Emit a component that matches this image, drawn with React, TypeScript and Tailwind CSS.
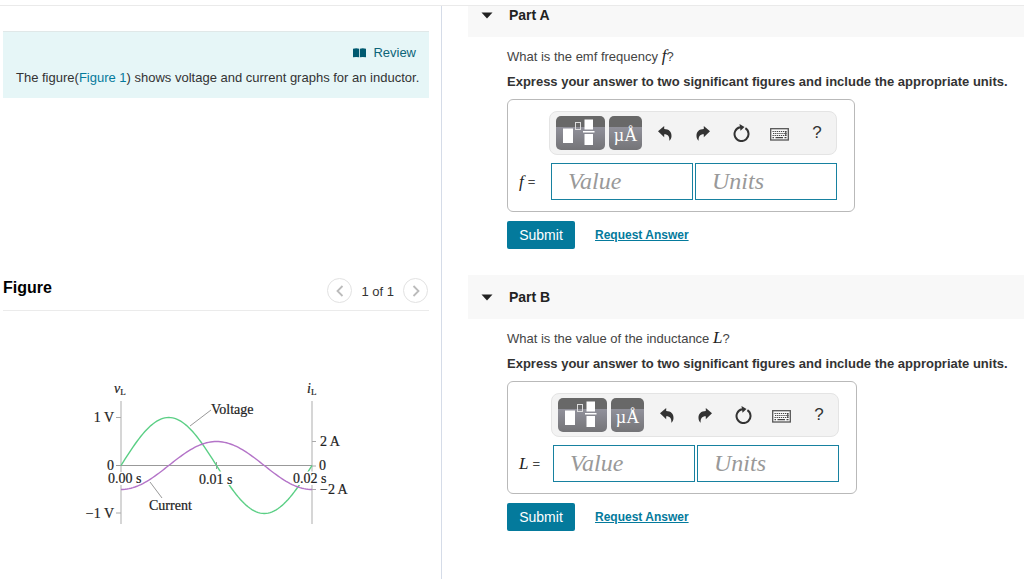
import React from 'react';

const ORIGIN_X = 121;
const ORIGIN_Y = 465.5;
const PERIOD = 191;

function wave(fn: (phase: number) => number, amplitude: number) {
  const points: string[] = [];
  for (let i = 0; i <= 96; i++) {
    const x = ORIGIN_X + (PERIOD * i) / 96;
    const y = ORIGIN_Y - amplitude * fn((2 * Math.PI * i) / 96);
    points.push(`${x.toFixed(2)},${y.toFixed(2)}`);
  }
  return 'M' + points.join('L');
}

function InductorGraph() {
  return (
    <svg
      viewBox="80 376 280 152"
      className="block w-[280px] h-[152px] font-['Liberation_Serif',serif] text-[14px]"
      role="img"
      aria-label="Voltage and current graphs"
    >
      <g stroke="#c9c9c9" strokeWidth="1.5">
        <path d="M121 401V524M312 401V524" />
        <path d="M116 417.5h5M116 513h5M312 441.5h4M312 466h4M312 489.5h4" stroke="#aaa" strokeWidth="1" />
      </g>
      <path d="M116 465.5H312M216.500 462v7" stroke="#999" />
      <path d={wave(Math.sin, 48)} fill="none" stroke="#5bcf85" strokeWidth="1.4" />
      <path d="M108 472h34v13h-34zM198 471.500h35v13.500h-35zM292 471.500h35v13.500h-35z" fill="#fff" />
      <path d={wave((p) => -Math.cos(p), 24)} fill="none" stroke="#b474c8" strokeWidth="1.4" />
      <path d="M190 426L211 410M150 482L162 498" stroke="#999" />
      <g fill="#222" stroke="#222" strokeWidth="0.2">
        <text x="114" y="393" fontStyle="italic">v<tspan fontStyle="normal" fontSize="9" dy="2">L</tspan></text>
        <text x="307" y="393" fontStyle="italic">i<tspan fontStyle="normal" fontSize="9" dy="2">L</tspan></text>
        <text x="114" y="422" textAnchor="end">1 V</text>
        <text x="114" y="470" textAnchor="end">0</text>
        <text x="114" y="518" textAnchor="end">−1 V</text>
        <text x="108" y="483">0.00 s</text>
        <text x="199" y="484">0.01 s</text>
        <text x="293" y="483">0.02 s</text>
        <text x="320" y="446">2 A</text>
        <text x="319" y="470">0</text>
        <text x="320" y="494">−2 A</text>
        <text x="211" y="414">Voltage</text>
        <text x="149" y="510">Current</text>
      </g>
    </svg>
  );
}

function CurvedArrow({ flip = false }: { flip?: boolean }) {
  return (
    <svg viewBox="0 0 14 15" className={flip ? 'w-[14px] h-[15px] -scale-x-100' : 'w-[14px] h-[15px]'} aria-hidden="true">
      <path d="M0 5.300L6.200 0V3C10.800 3 13.800 5.800 13.500 10.300C13.400 12.300 12.400 14 11.300 14.800C11.700 10.800 10.300 8.300 6.200 8.300V11.200Z" fill="#333" />
    </svg>
  );
}

function ResetIcon() {
  return (
    <svg viewBox="0 0 18 18" className="w-[18px] h-[18px]" aria-hidden="true">
      <path d="M13.400 4.200A7 7 0 1 1 8 3.200" fill="none" stroke="#333" strokeWidth="2" />
      <path d="M7.500 0L12.500 3L8.500 6.700Z" fill="#333" />
    </svg>
  );
}

function KeyboardIcon() {
  return (
    <svg viewBox="0 0 19 13" className="w-[19px] h-[13px]" aria-hidden="true">
      <rect x="0.700" y="0.700" width="17.600" height="11.300" fill="#fafafa" stroke="#555" strokeWidth="1.300" />
      <path d="M2.500 3.500H16.500M3 5.500H16.500M2.500 7.500H16.500" stroke="#444" strokeWidth="1.200" strokeDasharray="1.300 0.800" />
      <path d="M2.500 9.700H4M5.500 9.700H13M14.500 9.700H16.500M15.800 3V8" stroke="#444" strokeWidth="1.200" />
    </svg>
  );
}

function TemplatesIcon() {
  return (
    <svg viewBox="0 0 49 34" className="w-[49px] h-[34px]" aria-hidden="true">
      <path d="M7 12.500h10v14.500h-10zM28.500 3.500h8.500v10h-8.500zM28.500 18h8.500v11h-8.500zM27 15h11.500v1.500h-11.500z" fill="#fff" />
      <rect x="19.500" y="6.500" width="5" height="7" fill="none" stroke="#ddd" />
    </svg>
  );
}

const darkButton =
  'h-[34px] rounded-[5px] text-white bg-[linear-gradient(#686868_0,#686868_11px,#91919b_11px,#747477_100%)] flex items-center justify-center';
const toolButton = 'w-[38px] h-[34px] flex items-center justify-center text-[#333]';

function Toolbar() {
  return (
    <div role="toolbar" className="flex h-[44px] items-center rounded-[8px] border border-[#e4e4e4] bg-[#f3f3f3] pl-[6px]">
      <button type="button" aria-label="Templates" className={`${darkButton} w-[49px]`}>
        <TemplatesIcon />
      </button>
      <button type="button" className={`${darkButton} ml-1 w-[33px] pt-1 font-['Liberation_Serif',serif] text-[18px]`}>
        µÅ
      </button>
      <div className="ml-[4px] flex">
        <button type="button" aria-label="Undo" className={toolButton}><CurvedArrow /></button>
        <button type="button" aria-label="Redo" className={toolButton}><CurvedArrow flip /></button>
        <button type="button" aria-label="Reset" className={toolButton}><ResetIcon /></button>
        <button type="button" aria-label="Keyboard" className={`${toolButton} pt-[3px]`}><KeyboardIcon /></button>
        <button type="button" className={`${toolButton} text-[17px]`}>?</button>
      </div>
    </div>
  );
}

interface PartProps {
  title: string;
  question: string;
  symbol: string;
  columns: string;
}

const field =
  "h-[37px] w-[142px] border border-[#1781a0] bg-white px-4 font-['Liberation_Serif',serif] text-[24px] text-[#333] placeholder:italic placeholder:text-[#999] outline-none";

function Part({ title, question, symbol, columns }: PartProps) {
  const id = title.replace(' ', '-').toLowerCase();
  return (
    <section className="mb-[26px]">
      <h2 className="bg-[#f8f8f8] text-[14px] font-bold leading-5 text-[#222]">
        <button type="button" className="flex h-[44px] w-full items-center pl-[13px]">
          <svg viewBox="0 0 12 7" className="h-[7px] w-[12px]" aria-hidden="true">
            <path d="M0.500 0.500H11.500L6 6.500Z" fill="#222" />
          </svg>
          <span className="ml-4">{title}</span>
        </button>
      </h2>
      <div className="pl-[39px] pt-[8px]">
        <p className="h-[24px] whitespace-nowrap leading-[24px] text-[#444]">
          {question}{' '}
          <i className="font-['Liberation_Serif',serif] text-[17px] leading-none text-[#222]">{symbol}</i>?
        </p>
        <p className="mt-[3px] whitespace-nowrap font-bold leading-[20px] text-[#333]">
          Express your answer to two significant figures and include the appropriate units.
        </p>
        <div className={`mt-[7px] grid w-fit rounded-[6px] border border-[#b9b9b9] pb-[11px] pl-[11px] pr-[17px] pt-[11px] ${columns}`}>
          <div className="col-start-2">
            <Toolbar />
          </div>
          <label htmlFor={`${id}-value`} className="mt-[8px] flex h-[37px] items-center text-[#444]">
            <i className="mr-1 font-['Liberation_Serif',serif] text-[17px] text-[#222]">{symbol}</i>=
          </label>
          <div className="mt-[8px] flex gap-[2px] pl-[2px]">
            <input id={`${id}-value`} placeholder="Value" className={field} />
            <input aria-label={`${title} units`} placeholder="Units" className={field} />
          </div>
        </div>
        <div className="mt-[9px] flex items-center">
          <button type="button" className="h-[28px] w-[68px] rounded-[2px] bg-[#047a9c] text-[14px] text-white">
            Submit
          </button>
          <a href="#request" className="ml-5 text-[12px] font-bold text-[#047a9c] underline">
            Request Answer
          </a>
        </div>
      </div>
    </section>
  );
}

const pager = 'flex h-[25px] w-[25px] items-center justify-center rounded-full border border-[#e2e2e2] bg-white';

export default function App() {
  return (
    <div className="flex min-h-screen flex-col bg-white pt-[5px] font-['Liberation_Sans',Arial,sans-serif] text-[13px] text-[#333]">
      <main className="grid flex-1 grid-cols-[minmax(0,442fr)_minmax(0,582fr)] border-t border-[#eaeaea]">
        <aside className="border-r border-[#d5dce8] pl-[3px] pr-3">
          <div className="mt-[25px] h-[67px] border-t border-[#e0e8e8] bg-[#e6f6f7] px-[13px] pt-[11px] leading-5">
            <a href="#review" className="flex items-center justify-end gap-[7px] text-[#0d6478]">
              <svg viewBox="0 0 13 10" className="h-[10px] w-[13px]" aria-hidden="true">
                <path d="M0 0.800Q3.500 -0.300 6.100 0.800V9.300Q3.500 8.600 0 9.300ZM6.900 0.800Q9.500 -0.300 13 0.800V9.300Q9.500 8.600 6.900 9.300Z" fill="#005a70" />
              </svg>
              Review
            </a>
            <p className="mt-[5px] whitespace-nowrap">
              The figure(<a href="#figure" className="text-[#047a9c]">Figure 1</a>) shows voltage and current graphs for an inductor.
            </p>
          </div>
          <div id="figure" className="mt-[177px] flex h-[36px] items-start justify-between border-b border-[#ebebeb]">
            <h2 className="pt-[1px] text-[16px] font-bold leading-6 text-black">Figure</h2>
            <div className="flex items-center gap-[9px] pr-[1px] pt-[3px]">
              <button type="button" aria-label="Previous figure" className={pager}>
                <svg viewBox="0 0 8 12" className="h-3 w-2" aria-hidden="true"><path d="M6.500 1L1.500 6L6.500 11" fill="none" stroke="#bbb" strokeWidth="1.800" /></svg>
              </button>
              <span className="pt-[3px]">1 of 1</span>
              <button type="button" aria-label="Next figure" className={pager}>
                <svg viewBox="0 0 8 12" className="h-3 w-2" aria-hidden="true"><path d="M1.500 1L6.500 6L1.500 11" fill="none" stroke="#bbb" strokeWidth="1.800" /></svg>
              </button>
            </div>
          </div>
          <div className="pl-[77px] pt-[65px]">
            <InductorGraph />
          </div>
        </aside>
        <div className="overflow-hidden pl-[26px]">
          <div className="-mt-[13px]">
            <Part title="Part A" question="What is the emf frequency" symbol="f" columns="grid-cols-[30px_288px]" />
            <Part title="Part B" question="What is the value of the inductance" symbol="L" columns="grid-cols-[32px_288px]" />
          </div>
        </div>
      </main>
    </div>
  );
}
